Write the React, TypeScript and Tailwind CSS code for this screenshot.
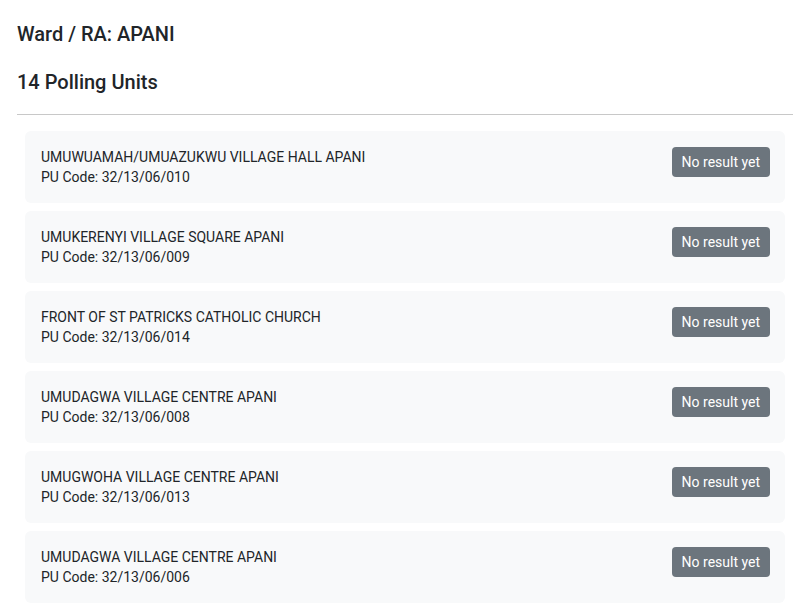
import React from "react";

type Unit = { name: string; code: string };

const units: Unit[] = [
  { name: "UMUWUAMAH/UMUAZUKWU VILLAGE HALL APANI", code: "32/13/06/010" },
  { name: "UMUKERENYI VILLAGE SQUARE APANI", code: "32/13/06/009" },
  { name: "FRONT OF ST PATRICKS CATHOLIC CHURCH", code: "32/13/06/014" },
  { name: "UMUDAGWA VILLAGE CENTRE APANI", code: "32/13/06/008" },
  { name: "UMUGWOHA VILLAGE CENTRE APANI", code: "32/13/06/013" },
  { name: "UMUDAGWA VILLAGE CENTRE APANI", code: "32/13/06/006" },
];

export default function App() {
  return (
    <div
      className="min-h-screen bg-white text-[#212529] pl-[17px] pt-[22px]"
      style={{ fontFamily: "Roboto, 'Liberation Sans', sans-serif" }}
    >
      <h5 className="text-[20px] font-medium leading-[24px]">Ward / RA: APANI</h5>
      <h5 className="mt-[24px] text-[20px] font-medium leading-[24px]">14 Polling Units</h5>
      <hr className="mt-[20px] border-t border-[#c8c8c8]" />
      <div className="mt-[16px] flex flex-col gap-[8px] px-[8px]">
        {units.map((u, i) => (
          <div
            key={i}
            className="flex items-start justify-between rounded-[6px] bg-[#f8f9fa] pl-[16px] pr-[15px] py-[16px]"
          >
            <div className="text-[14px] leading-[20px]">
              <div>{u.name}</div>
              <div>PU Code: {u.code}</div>
            </div>
            <span className="rounded-[4px] bg-[#6c757d] px-[10px] text-[14px] leading-[30px] text-white">
              No result yet
            </span>
          </div>
        ))}
      </div>
    </div>
  );
}
